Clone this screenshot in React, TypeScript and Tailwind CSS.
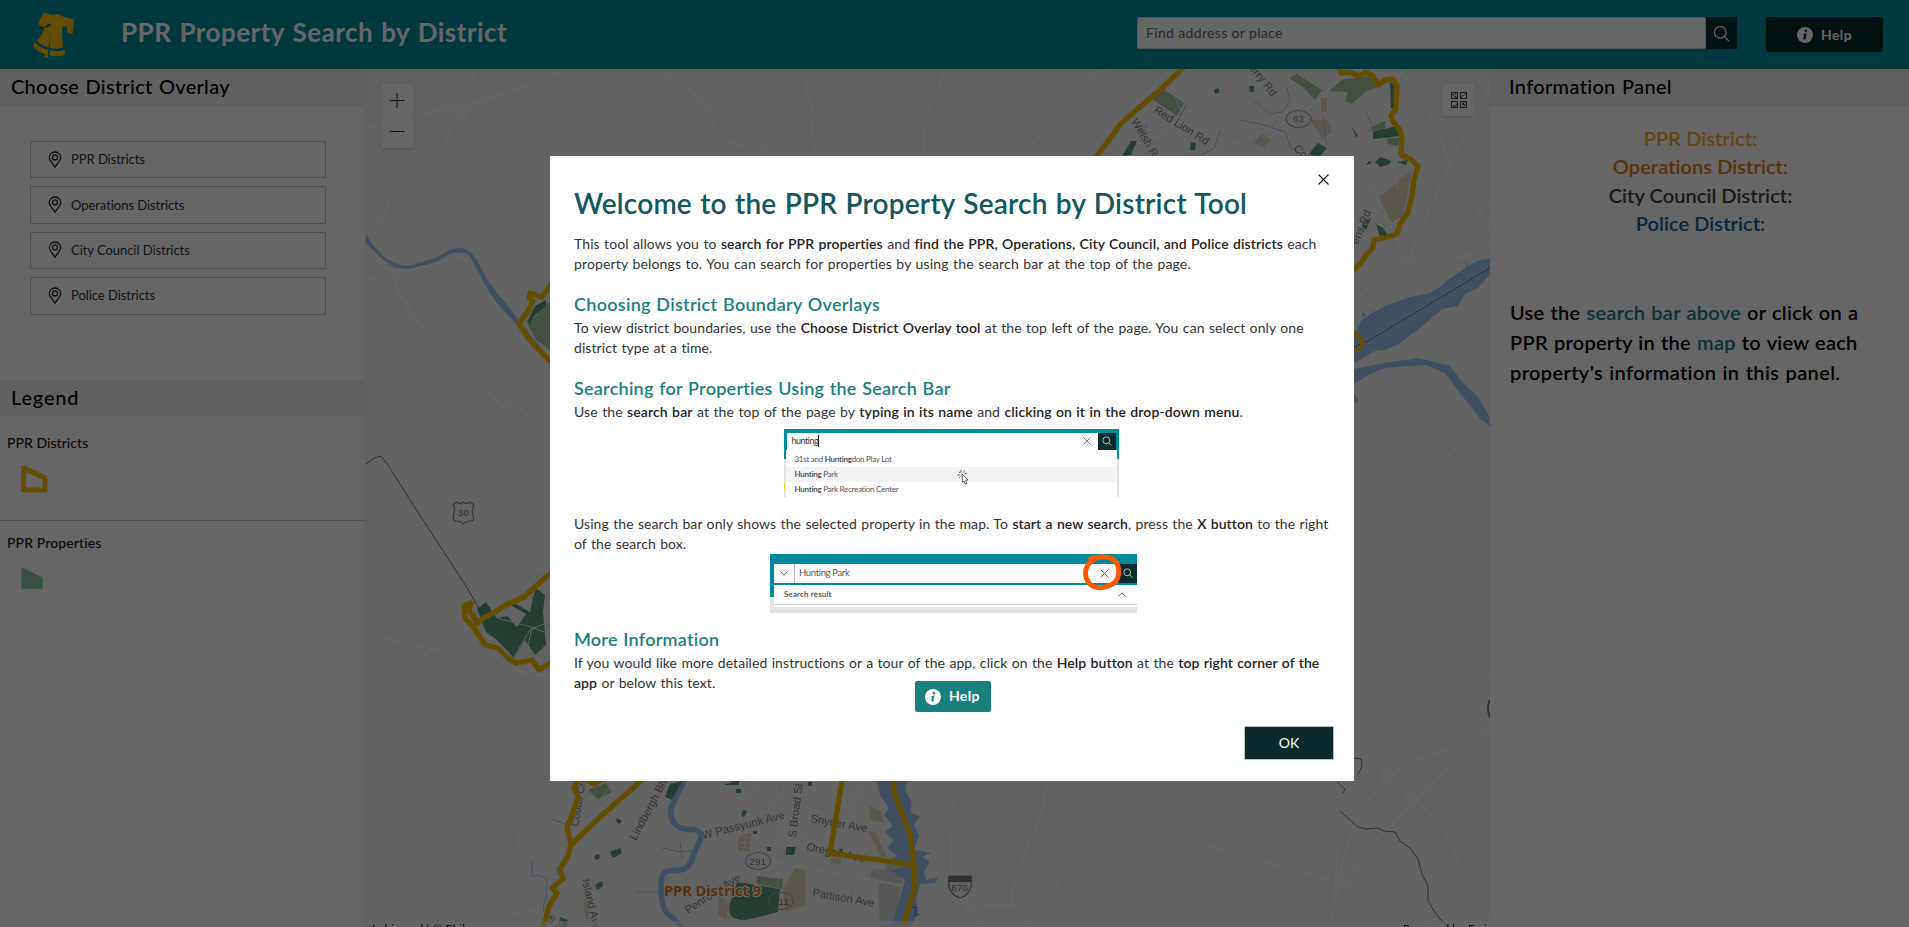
import type { ReactNode } from "react";

/* ---------- icons ---------- */

function BellLogo() {
  return (
    <svg viewBox="0 0 70 70" className="h-[70px] w-[70px]" fill="#fbbc08">
      <path d="M24 12.5 L33 15.3 Q38.5 12.5 42 16.3 L54 19.3 L52.5 33.8 L47 32.3 Q48.2 27 45 26 Q42 25.5 42.300 29.5 Q41.5 38 43 47.6 Q35.500 49.7 29.7 47.4 L31 32 L28.6 47.2 Q21.500 46 16.500 40.500 Q22 36.5 24.500 28 Q30.300 27 31 24 Q27 22 25 27.200 L18.300 25.2 L20.500 18 Z" />
      <path d="M15 42 Q20 48 28.2 50 L27.7 54.8 Q18 52.800 12.8 46 Z" />
      <path d="M29.600 50.300 Q37 52 45.300 50.2 L44.600 55.200 Q36.500 56.800 29.400 55.400 Z" />
      <circle cx="26.300" cy="55.900" r="2" />
    </svg>
  );
}

function PinIcon() {
  return (
    <svg viewBox="0 0 14 18" className="h-[18px] w-[14px] shrink-0" fill="none" stroke="#222" strokeWidth="1.3">
      <path d="M7 16.3 C5 12.6 1.3 9.7 1.3 6.6 A5.7 5.6 0 0 1 12.7 6.6 C12.7 9.7 9 12.6 7 16.3 Z" />
      <circle cx="7" cy="6.4" r="2.5" />
    </svg>
  );
}

function InfoIcon({ dot }: { dot: string }) {
  return (
    <svg viewBox="0 0 16 16" className="h-4 w-4 shrink-0">
      <circle cx="8" cy="8" r="8" fill="#fff" />
      <circle cx="8.9" cy="4.1" r="1.35" fill={dot} />
      <path d="M6 6.9 L9.6 6.4 L8.4 11 Q8.3 11.7 9.7 10.9 L9.5 11.6 Q6 13.7 6.3 11.3 L7.2 7.7 L5.9 7.5 Z" fill={dot} />
    </svg>
  );
}

function SearchGlyph({ className }: { className: string }) {
  return (
    <svg viewBox="0 0 18 18" className={className} fill="none" stroke="#fff" strokeWidth="1.2">
      <circle cx="7.7" cy="7.7" r="6.2" />
      <path d="M12 12 L16.8 17" />
    </svg>
  );
}

function BasemapIcon() {
  return (
    <svg viewBox="0 0 16 16" className="h-4 w-4" fill="none" stroke="#444" strokeWidth="1">
      <rect x="0.5" y="0.5" width="6" height="6" />
      <rect x="9.5" y="0.5" width="6" height="6" />
      <rect x="0.5" y="9.5" width="6" height="6" />
      <rect x="9.5" y="9.5" width="6" height="6" />
      <path d="M1 2.5 L3 3 L4 5 L6.5 5.5 M4 1 L5 3 M10 6 C11 3 13 4 15 1.5 M1.5 14 H4.5 L6 11.5 M11 11 L14 14 M13 10 L11.5 13 L14.5 12" />
    </svg>
  );
}

/* ---------- map ---------- */

const roads = [
  "M366 128 L386 126 M412 118 L445 107 L470 104 L490 98 Q515 92 533 82 L560 72",
  "M469 69 Q479 85 481 97 Q474 104 462 117 Q450 126 447 138 Q443 151 430 154 L416 157 Q400 174 391 189 Q388 200 387 208 Q383 219 366 231",
  "M443 106 Q450 102 452 110 Q462 116 467 113 M446 112 L478 108 M455 120 L475 100",
  "M366 281 L385 275 L440 263 L458 257 Q466 258 470 266 L482 283 L496 305 L512 327 L530 350 L550 371",
  "M366 238 L382 265 L394 273 L396 286 L404 300 L424 330",
  "M396 290 Q402 300 408 310 L424 332",
  "M665 73 L703 100 L715 130 Q722 144 745 146 L762 148 L775 156",
  "M805 69 L806 85 L814 119 L811 130 L817 156",
  "M945 69 L931 105 L924 130 L923 156",
  "M1095 74 L1072 111 L1047 126 L1035 141 L1027 156",
  "M469 371 Q480 388 491 395 L504 408 Q507 399 514 402 Q528 413 537 427 Q545 442 550 443",
  "M366 452 Q400 478 450 506 M474 521 Q490 526 505 543 L524 563 Q540 569 550 573",
  "M366 634 L440 651 L520 671 Q528 677 550 674",
  "M366 690 L430 651 L478 622",
  "M441 925 Q444 915 450 910 Q500 875 517 858 L519 834 Q535 818 560 805",
  "M490 919 Q515 914 528 911 Q537 911 550 917",
  "M965 781 Q953 800 952 812 L951 872 Q955 890 962 902 L982 927",
  "M1047 781 L1043 810 L1031 838 L1015 878 L1010 905 M1031 838 L1060 888 L1082 927",
  "M775 862 L915 888 L960 903 L975 906 L1013 905 L1030 927",
  "M1090 781 Q1140 812 1205 845 L1330 880 M1338 845 L1332 927",
  "M1354 509 L1390 491 L1430 468 Q1455 452 1468 438 L1490 418",
  "M1490 678 L1460 696 L1440 703 L1412 725 L1378 743 L1355 746 L1390 777 L1412 797 L1441 823 L1465 877 L1490 917",
  "M1490 723 Q1468 744 1430 755 Q1400 766 1388 778 Q1350 815 1341 870 L1335 900",
  "M1490 730 L1430 785 L1375 842 L1340 888",
  "M1341 880 L1440 927",
  "M1399 69 L1430 112 L1450 165 L1478 208 L1490 228",
  "M1490 85 L1449 166 L1421 228 L1408 265",
  "M1354 303 Q1380 275 1402 262 Q1440 258 1455 238 L1490 202",
  "M1354 314 L1420 277 Q1445 262 1490 246",
  "M1354 160 L1385 212 L1397 240 L1408 262",
  "M1201 156 L1298 118 L1352 69 M1260 156 L1296 122",
  "M1090 78 L1112 66 M1108 69 L1150 115 M1205 69 L1170 130 L1120 156",
  "M1262 90 L1286 112 L1350 190",
];

const thinRoads = [
  "M451 69 Q459 90 459 103 L470 126 L473 136 L498 159 L522 182 L550 211",
  "M366 122 L398 150 L431 167 L480 180 L532 202 L550 216",
  "M657 69 L664 73 M694 69 L704 104 L742 134 L780 156",
  "M660 72 L670 110 L667 156",
  "M572 72 Q560 92 575 105 L613 132 L622 144 L622 156",
  "M1165 69 L1180 110 L1230 156 M1215 69 L1265 140 M1140 128 L1190 156",
  "M1300 145 L1390 156 L1398 190 M1350 105 L1390 156 M1340 135 L1378 190",
  "M1354 200 L1380 230 M1363 188 L1355 235 M1330 110 L1392 118",
  "M1230 90 L1210 156 M1300 85 L1262 110 M1200 100 L1160 140",
  "M575 830 L615 781 M590 860 L660 781 M560 905 L640 850 M572 890 L650 900 M600 880 L680 840 L705 832",
  "M740 781 L745 800 L735 850 M735 850 L780 860 M700 927 L760 872 M785 781 L775 927",
  "M855 781 L850 870 L846 927 M862 781 L858 870 L852 920",
];

const gridLines = Array.from({ length: 26 }, (_, i) => 716 + i * 6.2);
const gridRows = Array.from({ length: 16 }, (_, i) => 780 + i * 5.4);
const westLines = Array.from({ length: 9 }, (_, i) => i * 11);

const properties = [
  "M1308 155 L1318 143 L1327 148 L1320 156 Z",
  "M1373 132 L1397 126 L1400 136 L1373 139 Z",
  "M1375 162 L1380 157 L1392 161 L1388 165 L1380 167 Z",
  "M1390 82 L1395 85 L1394 108 L1391 108 Z",
  "M1376 224 L1383 228 L1388 236 L1380 237 Z",
  "M1122 156 L1131 141 L1137 141 L1131 155 Z",
  "M1191 142 L1196 143 L1195 150 L1190 150 Z M1249 86 H1254 V92 H1250 Z M1214 90 L1219 88 V93 L1215 94 Z",
  "M1351 126 L1358 136 L1356 137 Z M1364 220 L1371 218 L1366 230 L1362 226 Z",
  "M737 882 L780 889 L778 912 Q760 917 745 920 Q733 920 730 914 Q728 908 731 900 Z",
  "M477 609 L486 602 L497 618 L507 616 L517 627 L526 614 L512 606 L509 600 L530 612 L533 598 L536 588 L545 595 L543 612 L546 645 L535 655 L525 640 L514 658 L497 640 L486 632 Z",
  "M670 784 L682 781 L672 800 L665 797 Z",
  "M527 322 L535 306 L546 300 L546 306 L534 316 L530 325 Z",
  "M743 810 L747 811 L744 817 L741 816 Z M786 847 H796 L794 855 H786 Z M736 789 H741 V793 H736 Z M808 782 H812 V786 H808 Z M617 818 L622 821 L619 824 L616 821 Z",
  "M610 852 L620 848 L622 853 L613 858 Z M595 885 L602 881 L603 886 L597 890 Z M594 856 L599 854 L600 858 L596 860 Z",
  "M560 917 L568 920 L566 927 L558 927 Z M733 781 H739 V785 H724 Z M753 831 H757 V834 H753 Z M767 847 H771 V851 H767 Z M839 849 H843 V853 H839 Z",
  "M1372 163 L1366 165 L1369 161 Z M1397 162 L1408 160 L1406 165 Z",
];

const parks = [
  "M1328 91 L1340 80 L1370 76 L1379 86 L1365 92 L1352 104 L1345 101 L1348 92 Z",
  "M1289 78 L1297 74 L1322 90 L1315 100 L1302 86 Z",
  "M1152 99 L1163 89 L1187 105 L1180 118 Z",
  "M1371 127 L1385 121 L1385 130 L1372 132 Z M1387 138 H1400 L1398 146 L1388 144 Z",
  "M757 876 L783 879 L782 889 L757 884 Z",
  "M528 325 L545 305 L550 302 L550 350 L536 340 Z",
  "M588 790 L606 783 L612 792 L598 799 Z",
];

const tan = [
  "M1380 196 L1412 170 L1403 216 L1392 222 L1382 212 Z",
  "M1310 120 H1328 L1332 132 L1322 138 Z M1254 142 L1262 134 L1271 140 L1263 148 Z M1321 98 H1327 V112 H1321 Z",
  "M795 868 L805 870 L806 905 L785 912 L783 889 Z",
  "M737 836 L752 832 L750 852 L738 852 Z",
  "M868 831 L876 832 L887 858 L881 856 Z M869 806 L880 810 L884 823 L870 820 Z",
  "M831 853 L842 857 L840 865 L831 863 Z M718 895 L730 903 L726 920 L718 915 Z M584 898 L590 900 L588 925 L584 910 Z",
];

function StreetLabel({ x, y, r, children, size = 11.3 }: { x: number; y: number; r: number; children: ReactNode; size?: number }) {
  return (
    <text x={x} y={y} fontSize={size} transform={`rotate(${r} ${x} ${y})`} fill="#858585" stroke="#f5f5f5" strokeWidth="1.5" paintOrder="stroke" className="font-['Liberation_Sans']">
      {children}
    </text>
  );
}

function DistrictMap() {
  return (
    <svg viewBox="366 69 1124 858" className="absolute inset-0 h-full w-full" fill="none" strokeLinejoin="round" strokeLinecap="round">
      <defs>
        <clipPath id="southPhilly">
          <path d="M706 781 L865 781 L855 860 L742 848 L728 820 Z" />
        </clipPath>
        <clipPath id="west">
          <path d="M580 785 L660 781 L668 800 L655 880 L600 927 L548 927 L575 850 Z" />
        </clipPath>
      </defs>
      <rect x="366" y="69" width="1124" height="858" fill="#f4f4f4" />
      {tan.map((d) => <path key={d} d={d} fill="#e6d9c3" />)}
      <path d="M888 858 L905 864 L895 920 L880 927 L878 890 Z M872 868 L885 870 L880 882 L870 880 Z" fill="#dadada" />
      {parks.map((d) => <path key={d} d={d} fill="#b0c8a6" />)}

      <g stroke="#ffffff" strokeWidth="1" opacity="0.75">
        <g clipPath="url(#southPhilly)">
          {gridLines.map((x) => <path key={x} d={`M${x} 780 L${x - 12} 870`} />)}
          {gridRows.map((y) => <path key={y} d={`M690 ${y - 8} L880 ${y + 12}`} />)}
        </g>
        <g clipPath="url(#west)" opacity="0.6">
          {westLines.map((o) => <path key={o} d={`M${545 + o} ${850 + o} L${640 + o} ${740 + o} M${560 + o} ${780 + o * 1.3} L${660 + o} ${860 + o * 1.3}`} />)}
        </g>
        {thinRoads.map((d) => <path key={d} d={d} />)}
      </g>
      <g stroke="#fdfdfd" strokeWidth="2.2">
        {roads.map((d) => <path key={d} d={d} />)}
        <circle cx="1388" cy="776" r="6" strokeWidth="1.5" />
        <ellipse cx="1429" cy="787" rx="6" ry="3" strokeWidth="1.5" />
        <ellipse cx="1410" cy="797" rx="4" ry="3" strokeWidth="1.5" />
      </g>

      {/* water */}
      <g fill="#a0c8f5" stroke="none">
        <path d="M1490 258 L1475 262 L1450 278 L1440 287 L1430 293 L1410 297 L1385 306 L1372 313 L1362 320 L1354 334 L1354 363 L1375 351 L1385 350 L1397 345 L1420 328 L1442 309 L1458 306 L1465 294 L1478 288 L1490 274 Z" />
        <path d="M1354 369 L1385 363 L1419 358 L1450 366 L1463 383 L1478 397 L1490 418 L1490 426 L1480 418 L1460 393 L1445 373 L1425 365 L1385 368 L1370 374 L1354 384 Z" />
        <path d="M877 781 L907 781 L905 790 L912 802 L910 812 L920 816 L914 825 L919 836 L914 850 L931 853 L922 857 L930 862 L924 872 L926 880 L938 877 L935 883 L920 884 L916 900 L918 912 L911 927 L880 927 L893 922 L905 880 L890 870 L903 868 L889 860 L898 856 L887 848 L894 840 L885 832 L893 826 L884 815 L889 808 L880 795 Z" />
        <path d="M1354 394 Q1360 398 1357 403 L1354 402 Z M1362 312 L1366 315 L1362 318 Z" />
        <path d="M366 233 L372 244 L384 257 Q400 268 412 265 L438 257 Q450 247 462 248 Q470 249 478 262 L490 284 L508 306 L520 322 L516 324 L503 310 L490 294 L481 277 L470 256 Q464 250 450 254 L436 262 L410 269 L396 268 L382 259 L366 243 Z" />
      </g>
      <g stroke="#a0c8f5">
        <path d="M684 781 Q676 797 671 808 Q669 826 685 829 L696 830 Q703 833 700 840 L693 856 Q691 868 680 870 L668 871 Q660 873 661 887 Q661 903 666 912 Q675 920 683 927" strokeWidth="5.5" strokeLinecap="butt" />
        <path d="M520 324 L550 360" strokeWidth="2" />
        <path d="M662 848 L680 852 L695 850 M680 842 L682 858 M638 892 L662 892 M552 819 L566 824 M706 880 V886" strokeWidth="1" />
        <path d="M532 862 V876 Q545 874 547 882 L546 898 Q542 906 544 912 M557 868 V875" strokeWidth="1" />
        <path d="M1240 120 L1265 125 L1285 132 L1292 150 M1253 100 L1270 114 L1282 112 L1290 102 L1287 88 M1220 131 L1214 148 L1202 155 M1323 116 L1326 145 M1165 92 L1182 104 M1143 134 L1147 124 M1366 112 L1372 125" strokeWidth="1" />
        <path d="M1465 262 L1469 269" strokeWidth="1.5" />
      </g>

      {properties.map((d) => <path key={d} d={d} fill="#5b9f7c" />)}
      <g stroke="#f0f0f0" strokeWidth="1">
        <path d="M514 657 L530 630 L548 622 M526 655 L532 628 L548 633 M497 618 L535 628" />
      </g>

      {/* state line */}
      <g stroke="#7a7a7a" strokeWidth="1">
        <path d="M366 464 L374 458 L381 456 L388 465 L410 500 L466 586 L484 617" />
        <path d="M1354 347 L1368 341 L1425 307 L1490 268" />
        <path d="M1340 811 L1358 827 L1366 829 L1378 828 L1384 831 L1395 832 L1400 841 L1410 848 L1418 859 L1422 874 L1428 886 L1428 900 L1434 911 L1440 919 L1448 927" />
        <path d="M1354 758 L1361 759 L1362 766 L1358 775 M1338 783 L1345 789 L1343 793" />
        <path d="M909 908 L916 907 L915 916 L919 914" />
        <path d="M1490 700 Q1486 708 1490 717" strokeWidth="2" />
      </g>

      <StreetLabel x={1153} y={112} r={32}>Red Lion Rd</StreetLabel>
      <StreetLabel x={1131} y={121} r={60}>Welsh Rd</StreetLabel>
      <StreetLabel x={1245} y={63} r={52}>berry Rd</StreetLabel>
      <StreetLabel x={1293} y={149} r={45}>College</StreetLabel>
      <StreetLabel x={1358} y={245} r={-68}>ens Rd</StreetLabel>
      <StreetLabel x={578} y={827} r={-80} size={10.5}>Cobbs Cre</StreetLabel>
      <StreetLabel x={636} y={841} r={-62}>Lindbergh Blv</StreetLabel>
      <StreetLabel x={703} y={839} r={-14}>W Passyunk Ave</StreetLabel>
      <StreetLabel x={796} y={838} r={-83}>S Broad St</StreetLabel>
      <StreetLabel x={810} y={822} r={10}>Snyder Ave</StreetLabel>
      <StreetLabel x={806} y={850} r={12}>Oregon Ave</StreetLabel>
      <StreetLabel x={812} y={896} r={10}>Pattison Ave</StreetLabel>
      <StreetLabel x={688} y={914} r={-33}>Penrose Ave</StreetLabel>
      <StreetLabel x={582} y={880} r={77}>Island Ave</StreetLabel>
      <StreetLabel x={546} y={920} r={40}>S 84th</StreetLabel>

      {/* route shields */}
      <g fill="#f5f5f5" stroke="#a5a5a5" strokeWidth="1.2">
        <ellipse cx="1298.5" cy="119" rx="12.5" ry="8.5" />
        <ellipse cx="758" cy="861" rx="12.5" ry="8.5" />
        <path transform="translate(0 8)" d="M454 505 Q456 500 453 497 L457 494 Q460 497 463.500 494 Q467 497 470 494 L474 497 Q471 502 473 507 Q475 513 471 513 Q466 513 463.500 516 Q461 513 456 513 Q452 513 454 505 Z" stroke="#8a8a8a" />
        <path d="M949 876 H971 Q974 893 960 898 Q946 893 949 876 Z" stroke="#8a8a8a" />
      </g>
      <ellipse cx="781" cy="901" rx="12.500" ry="8.500" stroke="#a5a5a5" strokeWidth="1" />
      <path d="M949 876 H971 L972 882 H948 Z" fill="#777" />
      <g fill="#7c7c7c" textAnchor="middle" className="font-['Liberation_Sans']" fontSize="9.500" letterSpacing="0.3">
        <text x="1298.500" y="122">63</text>
        <text x="758" y="864.500">291</text>
        <text x="781" y="904.500">611</text>
        <text x="463.500" y="516">30</text>
        <text x="960" y="891">676</text>
      </g>

      {/* district boundaries */}
      <g stroke="#ffc300" strokeWidth="5.300">
        <path d="M1184 67 L1160 90 L1120 124 L1112 136 L1096 157" />
        <path d="M1339 69 L1341 73 L1350 72 L1358 76 L1366 72 L1373 76 L1378 85 L1385 80 L1393 79 L1397 86 L1396 108 L1391 116 L1394 123 L1400 130 L1402 138 L1401 155 L1411 159 L1418 166 L1414 180 L1412 195 L1408 212 L1400 224 L1397 234 L1387 237 L1374 240 L1373 248 L1366 255 L1360 264 L1352 272" />
        <path d="M1352 330 L1363 341 L1361 347 L1352 352" strokeWidth="3.500" />
        <path d="M552 283 L542 297 L530 293 L529 298 L533 301 L528 311 L519 324 L532 343 L550 361" />
        <path d="M552 572 L536 586 L524 597 L508 604 L484 618 L475 625" />
        <path d="M471 603 L464 606 L465 618 L474 628 L478 634 L485 645 L498 648 L508 658 L516 663 L532 660 L539 670 L552 662 M471 603 L469 610 L477 622" />
        <path d="M577 781 L574 788 L578 797 L573 812 L567 828 L571 844 L568 856 L560 869 L563 879 L552 888 L557 893 L549 906 L546 919 L542 927" />
        <path d="M571 845 L600 817 L641 781 M586 780 H600 L594 784 Z" />
        <path d="M842 781 L830 853 L914 865" strokeLinecap="butt" strokeLinejoin="miter" />
        <path d="M894 781 V793 L910 834 L914 865 V890 L903 927" />
      </g>

      <text x="664" y="896" fontSize="14.600" fill="#e07c14" stroke="#f5f5f5" strokeWidth="2.500" paintOrder="stroke" className="font-['Noto_Sans'] font-bold">
        PPR District 9
      </text>
    </svg>
  );
}

/* ---------- panels ---------- */

function PanelHeader({ className, children }: { className: string; children: ReactNode }) {
  return (
    <h2 className={`shrink-0 bg-[#f0f0f0] text-[20px] font-medium text-black [word-spacing:1px] ${className}`}>
      {children}
    </h2>
  );
}

const overlays = ["PPR Districts", "Operations Districts", "City Council Districts", "Police Districts"];

function LeftPanel() {
  return (
    <aside className="flex w-[366px] shrink-0 flex-col border-r border-[#f0f0f0] bg-white">
      <PanelHeader className="h-[37px] pl-[11px] leading-[34px] tracking-[0.28px]">Choose District Overlay</PanelHeader>
      <div className="flex h-[274px] flex-col gap-2 pl-[30px] pt-[35px]">
        {overlays.map((name) => (
          <button key={name} className="flex h-[37.4px] w-[296px] items-center border border-[#c8c8c8] pl-[17px] text-[13px] leading-5 tracking-[-0.05px] text-[#333]">
            <PinIcon />
            <span className="ml-[9px] -mt-px">{name}</span>
          </button>
        ))}
      </div>
      <PanelHeader className="h-9 pl-[11px] leading-[35px] tracking-[0.8px]">Legend</PanelHeader>
      <div className="h-[105px] border-b border-[#c8c8c8] pl-[7px] pt-[17px] text-sm font-medium tracking-[0.04px] text-[#1a1a1a]">
        PPR Districts
        <svg viewBox="0 0 28 28" className="ml-[14px] mt-[12px] h-7 w-7">
          <path d="M2.500 3 L24 13 V25 H2.500 Z" fill="none" stroke="#ffc300" strokeWidth="5" strokeLinejoin="round" />
        </svg>
      </div>
      <div className="pl-[7px] pt-[12px] text-sm font-medium tracking-[0.12px] text-[#1a1a1a]">
        PPR Properties
        <svg viewBox="0 0 22 22" className="ml-[14px] mt-[14px] h-[22px] w-[22px]">
          <path d="M0.500 0.500 L21.500 10.500 V21.500 H0.500 Z" fill="#8fc8ac" stroke="#a8d4bf" />
        </svg>
      </div>
    </aside>
  );
}

function RightPanel() {
  return (
    <aside className="flex w-[419px] shrink-0 flex-col bg-white">
      <PanelHeader className="h-[37px] pl-[19px] leading-[34px] tracking-[0.32px]">Information Panel</PanelHeader>
      <div className="mt-[18px] pl-[2px] text-center text-[20px] font-semibold leading-[28.3px] tracking-[0.07px]">
        <p className="text-[#f5b01a]">PPR District:</p>
        <p className="text-[#ee7a10]">Operations District:</p>
        <p className="text-[#444]">City Council District:</p>
        <p className="text-[#15619c]">Police District:</p>
      </div>
      <p className="mt-[60px] whitespace-nowrap pl-[20px] text-[20px] font-semibold leading-[30px] tracking-[0.24px] text-black [word-spacing:0.9px]">
        Use the <span className="text-[#1a8080]">search bar above</span> or click on a<br />
        PPR property in the <span className="text-[#1a8080]">map</span> to view each<br />
        <span className="tracking-[0.36px]">property&apos;s information in this panel.</span>
      </p>
    </aside>
  );
}

function MapPanel() {
  return (
    <main className="relative flex-1 overflow-hidden">
      <DistrictMap />
      <div className="absolute left-[15px] top-[15px] flex h-16 w-8 flex-col bg-white shadow">
        {["M0.500 8.500 H15.500 M8 1 V16", "M0.500 7.500 H15.500"].map((d) => (
          <button key={d} className="flex flex-1 items-center justify-center">
            <svg viewBox="0 0 17 16" className="h-4 w-[17px]" stroke="#333" strokeWidth="1"><path d={d} /></svg>
          </button>
        ))}
      </div>
      <button className="absolute right-[15px] top-[15px] flex h-8 w-8 items-center justify-center bg-white shadow">
        <BasemapIcon />
      </button>
      <div className="absolute inset-x-0 bottom-0 flex h-1.5 justify-between overflow-hidden bg-white/60 pl-[6px] pr-[3px] text-[12px] leading-[16px] text-[#323232]">
        <span>Lubin and | © Phila</span>
        <span>Powered by Esri</span>
      </div>
    </main>
  );
}

/* ---------- welcome dialog ---------- */

function Heading({ className, children }: { className: string; children: ReactNode }) {
  return <h3 className={`text-[18px] font-semibold leading-6 text-[#1a8080] [word-spacing:0.8px] ${className}`}>{children}</h3>;
}

function Text({ className, children }: { className: string; children: ReactNode }) {
  return <p className={`whitespace-nowrap text-sm leading-5 text-[#333] [word-spacing:0.7px] ${className}`}>{children}</p>;
}

function Strong({ children }: { children: ReactNode }) {
  return <b className="font-semibold text-[#222]">{children}</b>;
}

function TypingExample() {
  return (
    <div className="relative mx-auto mt-[7px] flex h-[68px] w-[335px] flex-col overflow-hidden bg-[#e3e3e3] text-[#555]">
      <div className="h-8 bg-[#008a9b]">
        <div className="flex h-[20.500px] pl-[3px] pr-[3px] pt-[3.500px]">
          <div className="flex flex-1 items-center justify-between bg-white pl-[5px] pr-[7px]">
            <span className="border-r border-black text-[9px] leading-[12px] tracking-[-0.5px] text-[#333]">hunting</span>
            <svg viewBox="0 0 8 8" className="h-2 w-2" stroke="#666" strokeWidth="0.9"><path d="M0.500 0.500 L7.500 7.500 M7.500 0.500 L0.500 7.500" /></svg>
          </div>
          <div className="flex w-[18px] items-center justify-center bg-[#0a2c2e]"><SearchGlyph className="h-[10px] w-[10px]" /></div>
        </div>
      </div>
      <div className="-mt-[9px] mx-[2px] flex-1 bg-white pt-[2.500px] text-[8px] leading-[15px] tracking-[-0.27px]">
        <p className="h-[15px] pl-[9px]">31st and <b>Hunting</b>don Play Lot</p>
        <p className="h-[15px] bg-[#f4f4f4] pl-[9px]"><b>Hunting</b> Park</p>
        <p className="h-[15px] pl-[9px]"><b>Hunting</b> Park Recreation Center</p>
      </div>
      <svg viewBox="0 0 14 16" className="absolute left-[173px] top-[40px] h-4 w-[14px]" fill="none" stroke="#555" strokeWidth="0.9">
        <path d="M5 5 L11 11 L8.500 11.200 L10 14.500 L8 15 L7 12 L5.500 13.500 Z M4 1 V3.500 M1.500 2.500 L3 4 M0.500 6 H3 M7.500 1.500 L6.500 3.500 M10 4 L7.500 5 M2 9 L3.500 7.500" />
      </svg>
      <span className="absolute left-0 top-[54px] h-[6px] w-[1.500px] bg-[#ffc800]" />
    </div>
  );
}

function ClearExample() {
  return (
    <div className="relative mx-auto flex h-[59px] w-[367px] flex-col overflow-hidden bg-[#e3e3e3] text-[#555]">
      <div className="h-[43px] bg-[#008a9b] pl-1 pt-[9.500px]">
        <div className="flex h-[19px]">
          <div className="flex w-[21px] items-center justify-center border-r border-[#bbb] bg-white">
            <svg viewBox="0 0 8 5" className="h-[5px] w-2" fill="none" stroke="#555" strokeWidth="0.9"><path d="M0.500 0.500 L4 4.300 L7.500 0.500" /></svg>
          </div>
          <div className="flex flex-1 items-center justify-between bg-white pl-1 pr-[9px]">
            <span className="text-[9.500px] leading-[12px] tracking-[-0.35px]">Hunting Park</span>
            <svg viewBox="0 0 9 9" className="h-[9px] w-[9px]" stroke="#666" strokeWidth="1"><path d="M0.500 0.500 L8.500 8.500 M8.500 0.500 L0.500 8.500" /></svg>
          </div>
          <div className="flex w-[19px] items-center justify-center bg-[#0a2c2e]"><SearchGlyph className="h-[10px] w-[10px]" /></div>
        </div>
      </div>
      <div className="-mt-[12px] ml-1 flex h-[20px] items-center justify-between border-b border-[#d0d0d0] bg-white pl-[10px] pr-[11px]">
        <span className="-mt-px text-[8px] font-semibold leading-[12px] tracking-[0.15px] text-[#444]">Search result</span>
        <svg viewBox="0 0 8 5" className="h-[5px] w-2" fill="none" stroke="#555" strokeWidth="0.9"><path d="M0.500 4.500 L4 0.800 L7.500 4.500" /></svg>
      </div>
      <div className="ml-1 h-[2px] bg-white" />
      <svg viewBox="0 0 40 36" className="absolute left-[311px] top-[-1px] h-10 w-[43px]" fill="none" stroke="#ff5a00" strokeWidth="4.600">
        <path d="M9 5 Q20 1 30 5 Q36 10 35 19 Q34 27 26 30 Q16 34 9 29 Q3 23 4.500 15 Q6 8 13 5" strokeLinecap="round" />
      </svg>
    </div>
  );
}

function WelcomeDialog() {
  return (
    <section role="dialog" className="relative flex h-[625px] w-[804px] flex-col bg-white pl-6 pr-[20px] pt-[29px]">
      <button aria-label="Close" className="absolute right-[25px] top-[17px] flex h-3 w-3 items-center justify-center">
        <svg viewBox="0 0 11 11" className="h-[11px] w-[11px]" stroke="#222" strokeWidth="1.100"><path d="M0.500 0.500 L10.500 10.500 M10.500 0.500 L0.500 10.500" /></svg>
      </button>
      <h1 className="whitespace-nowrap text-[28px] font-semibold leading-9 tracking-[0.2px] text-[#10585a] [word-spacing:1.1px]">
        Welcome to the PPR Property Search by District Tool
      </h1>
      <Text className="mt-[13px] tracking-[0.09px]">
        This tool allows you to <Strong>search for PPR properties</Strong> and <Strong>find the PPR, Operations, City Council, and Police districts</Strong> each<br />
        <span className="tracking-[0.15px]">property belongs to. You can search for properties by using the search bar at the top of the page.</span>
      </Text>
      <Heading className="mt-[18px] tracking-[0.29px]">Choosing District Boundary Overlays</Heading>
      <Text className="mt-[2px] tracking-[0.08px]">
        To view district boundaries, use the <Strong>Choose District Overlay tool</Strong> at the top left of the page. You can select only one<br />
        district type at a time.
      </Text>
      <Heading className="mt-[18px] tracking-[0.24px]">Searching for Properties Using the Search Bar</Heading>
      <Text className="mt-[2px] tracking-[0.11px]">
        Use the <Strong>search bar</Strong> at the top of the page by <Strong>typing in its name</Strong> and <Strong>clicking on it in the drop-down menu</Strong>.
      </Text>
      <div className="w-[754px]"><TypingExample /></div>
      <Text className="mt-[17px] tracking-[0.07px]">
        Using the search bar only shows the selected property in the map. To <Strong>start a new search</Strong>, press the <Strong>X button</Strong> to the right<br />
        of the search box.
      </Text>
      <div className="w-[759px]"><ClearExample /></div>
      <Heading className="mt-[14px] tracking-[0.25px]">More Information</Heading>
      <Text className="mt-[2px] tracking-[0.07px]">
        If you would like more detailed instructions or a tour of the app, click on the <Strong>Help button</Strong> at the <Strong>top right corner of the</Strong><br />
        <Strong>app</Strong> or below this text.
      </Text>
      <button className="-mt-3 ml-[341px] flex h-[31px] w-[76px] items-center rounded-[2px] bg-[#1a807f] pl-[10px] text-sm font-bold tracking-[0.3px] text-white">
        <InfoIcon dot="#1a807f" /><span className="ml-[8px] -mt-px">Help</span>
      </button>
      <button className="mt-[14px] h-[34px] w-[90px] self-end border border-[#bdbdbd] bg-[#082a2a] text-sm text-white">OK</button>
    </section>
  );
}

export default function App() {
  return (
    <div className="relative flex h-[927px] w-[1909px] flex-col overflow-hidden font-['Lato',sans-serif]">
      <header className="flex h-[69px] shrink-0 items-start bg-[#008c9e]">
        <div className="pl-5"><BellLogo /></div>
        <h1 className="ml-[31px] mt-[14px] flex-1 whitespace-nowrap text-[26px] font-bold leading-9 tracking-[0.47px] text-white [word-spacing:1.3px]">
          PPR Property Search by District
        </h1>
        <div className="mt-[17px] flex h-8 w-[600px]">
          <div className="flex-1 rounded-[2px] border border-[#ccc] bg-white pl-[8px] text-sm leading-[30px] tracking-[0.35px] text-[#6e6e6e]">Find address or place</div>
          <div className="flex w-[31px] items-center justify-center bg-[#0a3233]"><SearchGlyph className="h-[17px] w-[17px]" /></div>
        </div>
        <button className="ml-[29px] mr-[26px] mt-[17px] flex h-[35px] w-[117px] items-center rounded-[2px] bg-[#082a2a] pl-[31px] text-sm font-bold tracking-[0.4px] text-white">
          <InfoIcon dot="#082a2a" /><span className="ml-[8px]">Help</span>
        </button>
      </header>
      <div className="flex min-h-0 flex-1">
        <LeftPanel />
        <MapPanel />
        <RightPanel />
      </div>
      <div className="absolute inset-0 flex items-start justify-center bg-black/60 pr-[5px] pt-[156px]">
        <WelcomeDialog />
      </div>
    </div>
  );
}
